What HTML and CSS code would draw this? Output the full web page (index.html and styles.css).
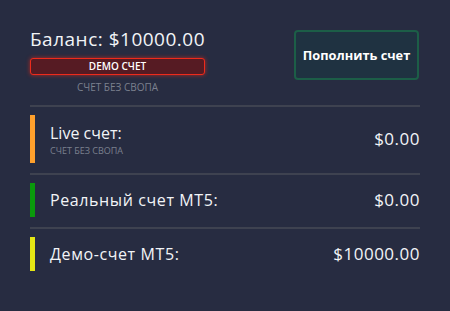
FILE: index.html
```html
<!DOCTYPE html>
<html lang="ru">
<head>
<meta charset="utf-8">
<link rel="stylesheet" href="styles.css">
</head>
<body>
<div class="panel">
  <div class="top">
    <div class="balance">
      <div class="balance-title">Баланс: $10000.00</div>
      <div class="badge">DEMO СЧЕТ</div>
      <div class="balance-sub">СЧЕТ БЕЗ СВОПА</div>
    </div>
    <button class="topup">Пополнить счет</button>
  </div>
  <div class="row">
    <span class="bar bar-orange"></span>
    <div class="row-label">
      <div class="row-title row-title-latin">Live счет:</div>
      <div class="row-sub">СЧЕТ БЕЗ СВОПА</div>
    </div>
    <div class="row-value">$0.00</div>
  </div>
  <div class="row">
    <span class="bar bar-green"></span>
    <div class="row-label">
      <div class="row-title">Реальный счет MT5:</div>
    </div>
    <div class="row-value">$0.00</div>
  </div>
  <div class="row row-last">
    <span class="bar bar-yellow"></span>
    <div class="row-label">
      <div class="row-title">Демо-счет MT5:</div>
    </div>
    <div class="row-value">$10000.00</div>
  </div>
</div>
</body>
</html>
```
FILE: styles.css
```css
html, body {
  margin: 0;
  padding: 0;
  background: #272c41;
}
body {
  width: 450px;
  height: 311px;
  font-family: "Open Sans", "DejaVu Sans", sans-serif;
  color: #f2f4f7;
}
.panel {
  padding: 30px 30px 0 30px;
}
.top {
  display: flex;
  justify-content: space-between;
  align-items: flex-start;
  border-bottom: 2px solid #3e4250;
  box-sizing: border-box;
  height: 77px;
}
.balance {
  width: 175px;
  display: flex;
  flex-direction: column;
}
.balance-title {
  font-size: 19px;
  line-height: 18px;
  letter-spacing: 0.5px;
  white-space: nowrap;
}
.badge {
  margin-top: 10px;
  height: 17px;
  box-sizing: border-box;
  border: 1.5px solid #ee2b1c;
  border-radius: 3px;
  background: #561b23;
  box-shadow: 0 0 4px rgba(240, 40, 20, 0.7);
  font-size: 10px;
  font-weight: 600;
  line-height: 14px;
  text-align: center;
  color: #ffffff;
}
.balance-sub {
  margin-top: 6px;
  font-size: 10px;
  line-height: 12px;
  text-align: center;
  color: #7b808e;
}
.topup {
  width: 125px;
  height: 50px;
  margin-right: 1px;
  border: 2px solid #1c5e47;
  border-radius: 4px;
  background: #1f3241;
  color: #ffffff;
  font-family: "Open Sans", "DejaVu Sans", sans-serif;
  font-size: 12.8px;
  font-weight: 700;
  padding: 0;
}
.row {
  display: flex;
  align-items: center;
  min-height: 34px;
  padding: 8px 0 10px 0;
  border-bottom: 2px solid #3e4250;
}
.row-last {
  border-bottom: none;
}
.bar {
  align-self: stretch;
  width: 5px;
  flex: none;
}
.bar-orange { background: #ffa02c; height: 48px; }
.bar-green { background: #0a9a0c; }
.bar-yellow { background: #e4e614; }
.row-label {
  flex: 1;
  margin-left: 15px;
}
.row-title {
  font-size: 16px;
  line-height: 20px;
  letter-spacing: 0.6px;
}
.row-title-latin {
  letter-spacing: 0;
}
.row-sub {
  margin-top: 2px;
  font-size: 9px;
  line-height: 11px;
  color: #7b808e;
}
.row-value {
  font-size: 17px;
  line-height: 20px;
  letter-spacing: 0.5px;
  text-align: right;
}
```
